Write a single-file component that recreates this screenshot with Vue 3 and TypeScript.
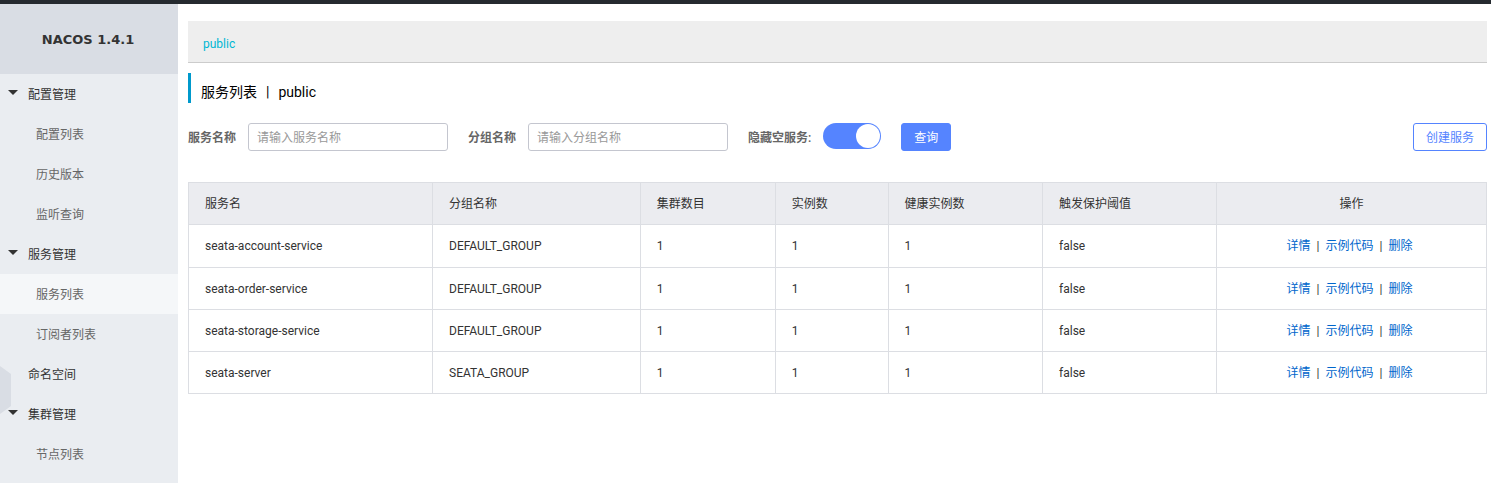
<script setup lang="ts">
import { ref } from 'vue'

interface MenuItem {
  label: string
  level: 1 | 2
  expandable?: boolean
  active?: boolean
}

interface Service {
  name: string
  group: string
  clusters: number
  instances: number
  healthy: number
  threshold: string
}

const menu: MenuItem[] = [
  { label: '配置管理', level: 1, expandable: true },
  { label: '配置列表', level: 2 },
  { label: '历史版本', level: 2 },
  { label: '监听查询', level: 2 },
  { label: '服务管理', level: 1, expandable: true },
  { label: '服务列表', level: 2, active: true },
  { label: '订阅者列表', level: 2 },
  { label: '命名空间', level: 1 },
  { label: '集群管理', level: 1, expandable: true },
  { label: '节点列表', level: 2 },
]

const services: Service[] = [
  { name: 'seata-account-service', group: 'DEFAULT_GROUP', clusters: 1, instances: 1, healthy: 1, threshold: 'false' },
  { name: 'seata-order-service', group: 'DEFAULT_GROUP', clusters: 1, instances: 1, healthy: 1, threshold: 'false' },
  { name: 'seata-storage-service', group: 'DEFAULT_GROUP', clusters: 1, instances: 1, healthy: 1, threshold: 'false' },
  { name: 'seata-server', group: 'SEATA_GROUP', clusters: 1, instances: 1, healthy: 1, threshold: 'false' },
]

const serviceName = ref('')
const groupName = ref('')
const hideEmpty = ref(true)
</script>

<template>
  <div class="page">
    <header class="topbar"></header>
    <div class="body">
      <aside class="sidebar">
        <h1 class="brand">NACOS 1.4.1</h1>
        <nav class="menu">
          <a
            v-for="item in menu"
            :key="item.label"
            href="#"
            class="item"
            :class="{ sub: item.level === 2, active: item.active }"
          >
            <span v-if="item.level === 1" class="arrow">
              <svg v-if="item.expandable" width="10" height="5" viewBox="0 0 10 5">
                <path d="M0 0H10L5 5Z" fill="#333" />
              </svg>
            </span>
            <span>{{ item.label }}</span>
          </a>
        </nav>
        <svg class="handle" width="11" height="48" viewBox="0 0 11 48">
          <path d="M0 0L11 8V40L0 48Z" fill="#d9dde4" />
        </svg>
      </aside>

      <main class="main">
        <div class="namespaces"><a href="#">public</a></div>
        <h2 class="title">
          <span>服务列表</span><span class="bar">|</span><span>public</span>
        </h2>

        <form class="filters" @submit.prevent>
          <label class="label" for="service-name">服务名称</label>
          <input id="service-name" v-model="serviceName" class="text" type="text" placeholder="请输入服务名称" />
          <label class="label" for="group-name">分组名称</label>
          <input id="group-name" v-model="groupName" class="text" type="text" placeholder="请输入分组名称" />
          <label class="label" for="hide-empty">隐藏空服务:</label>
          <input id="hide-empty" v-model="hideEmpty" class="switch" type="checkbox" role="switch" />
          <button class="btn primary" type="submit">查询</button>
          <button class="btn create" type="button">创建服务</button>
        </form>

        <table class="table">
          <colgroup>
            <col class="c-name" />
            <col class="c-group" />
            <col class="c-cluster" />
            <col class="c-inst" />
            <col class="c-healthy" />
            <col class="c-threshold" />
            <col />
          </colgroup>
          <thead>
            <tr>
              <th>服务名</th>
              <th>分组名称</th>
              <th>集群数目</th>
              <th>实例数</th>
              <th>健康实例数</th>
              <th>触发保护阈值</th>
              <th class="ops">操作</th>
            </tr>
          </thead>
          <tbody>
            <tr v-for="s in services" :key="s.name">
              <td>{{ s.name }}</td>
              <td>{{ s.group }}</td>
              <td>{{ s.clusters }}</td>
              <td>{{ s.instances }}</td>
              <td>{{ s.healthy }}</td>
              <td>{{ s.threshold }}</td>
              <td class="ops">
                <a href="#">详情</a><span class="sep">|</span><a href="#">示例代码</a><span class="sep">|</span><a href="#">删除</a>
              </td>
            </tr>
          </tbody>
        </table>
      </main>
    </div>
  </div>
</template>

<style>
body {
  margin: 0;
  background: #fff;
}
</style>

<style scoped>
.page {
  display: flex;
  flex-direction: column;
  min-height: 100vh;
  color: #333;
  font-family: Roboto, 'Noto Sans CJK SC', sans-serif;
  font-size: 12px;
  line-height: 20px;
}
.page * {
  box-sizing: border-box;
}
a {
  text-decoration: none;
}
.topbar {
  height: 4px;
  background: #252a2f;
}
.body {
  display: flex;
  flex: 1;
}
.sidebar {
  position: relative;
  flex: none;
  width: 178px;
  background: #eaedf1;
}
.brand {
  margin: 0;
  padding: 2px 2px 0 0;
  background: #d9dde4;
  font-family: 'DejaVu Sans', sans-serif;
  font-size: 13px;
  font-weight: 700;
  line-height: 68px;
  text-align: center;
}
.menu {
  display: flex;
  flex-direction: column;
}
.item {
  position: relative;
  z-index: 1;
  display: flex;
  align-items: center;
  height: 40px;
  padding: 2px 0 0 8px;
  color: #333;
}
.arrow {
  display: flex;
  width: 20px;
  padding-bottom: 5px;
}
.item.sub {
  padding-left: 36px;
  color: #666;
}
.item.active {
  background: #f5f7f9;
}
.handle {
  position: absolute;
  left: 0;
  top: 362px;
}
.main {
  flex: 1;
  min-width: 0;
  padding: 17px 4px 0 10px;
}
.namespaces {
  height: 42px;
  padding: 13px 15px 0;
  border-bottom: 1px solid #ccc;
  background: #eee;
}
.namespaces a {
  color: #00b7d3;
}
.title {
  display: flex;
  margin: 10px 0 20px;
  padding: 4px 0 0 10px;
  height: 30px;
  border-left: 3px solid #09c;
  color: #000;
  font-size: 14px;
  font-weight: 400;
  line-height: 30px;
}
.bar {
  margin: 0 9px;
}
.filters {
  display: flex;
  align-items: center;
  height: 28px;
  margin-bottom: 31px;
}
.label {
  margin-right: 12px;
  padding-top: 2px;
  color: #666;
  font-weight: 600;
}
.text {
  width: 200px;
  height: 28px;
  margin-right: 20px;
  padding: 2px 8px 0;
  border: 1px solid #c4c6cf;
  border-radius: 3px;
  background: #fff;
  color: #333;
  font: inherit;
}
.text::placeholder {
  color: #999;
}
.switch {
  appearance: none;
  display: flex;
  justify-content: flex-start;
  width: 58px;
  height: 26px;
  margin: 0 20px 2px 0;
  padding: 1px;
  border-radius: 13px;
  background: #c4c6cf;
}
.switch::before {
  content: '';
  width: 24px;
  height: 24px;
  border-radius: 50%;
  background: #fff;
}
.switch:checked {
  justify-content: flex-end;
  background: #5584ff;
}
.btn {
  height: 28px;
  padding: 2px 12px 0;
  border: 1px solid #5584ff;
  border-radius: 3px;
  font: inherit;
}
.primary {
  background: #5584ff;
  color: #fff;
}
.create {
  margin-left: auto;
  background: #fff;
  color: #5584ff;
}
.table {
  width: 100%;
  border-collapse: collapse;
  table-layout: fixed;
}
.c-name { width: 18.8%; }
.c-group { width: 16%; }
.c-cluster { width: 10.4%; }
.c-inst { width: 8.7%; }
.c-healthy { width: 11.9%; }
.c-threshold { width: 13.4%; }
.table th,
.table td {
  height: 42px;
  padding: 0 16px;
  border: 1px solid #dcdee3;
  font-weight: 400;
  text-align: left;
}
.table th {
  padding-top: 1px;
  background: #ebecf0;
}
.table tbody tr:first-child td {
  height: 43px;
}
.table .ops {
  text-align: center;
}
.table td.ops {
  padding-right: 20px;
}
.ops a {
  color: #06c;
}
.sep {
  margin: 0 6px;
}
</style>
